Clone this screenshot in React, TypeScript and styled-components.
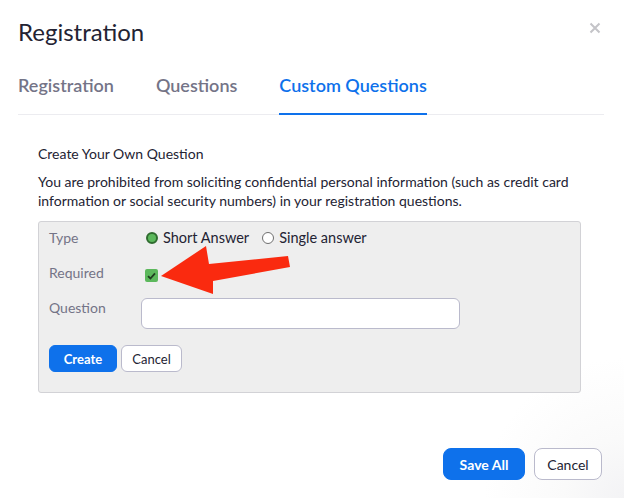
import React from "react";
import styled, { createGlobalStyle } from "styled-components";

const Global = createGlobalStyle`
  html, body { margin: 0; padding: 0; }
  body {
    width: 624px;
    height: 498px;
    overflow: hidden;
    background: radial-gradient(circle at 100% 100%, #f3f3f5 0px, #fafafa 60px, #ffffff 140px);
    font-family: Lato, "Open Sans", sans-serif;
    color: #232333;
  }
  * { box-sizing: border-box; }
`;

const Dialog = styled.div`
  position: relative;
  width: 624px;
  height: 498px;
  padding: 18px 20px 0 18px;
  display: flex;
  flex-direction: column;
`;

const Header = styled.div`
  display: flex;
  justify-content: space-between;
  align-items: flex-start;
`;

const Title = styled.h1`
  margin: 0;
  font-size: 24px;
  line-height: 28px;
  font-weight: 400;
  color: #232333;
`;

const Close = styled.button`
  border: 0;
  background: none;
  padding: 0;
  margin: 4px 3px 0 0;
  width: 12px;
  height: 12px;
  display: flex;
`;

const Tabs = styled.div`
  margin-top: 28px;
  display: flex;
  gap: 42px;
  border-bottom: 1px solid #ececf0;
`;

const Tab = styled.div<{ $active?: boolean }>`
  font-size: 18px;
  line-height: 22px;
  font-weight: 600;
  padding-bottom: 17px;
  margin-bottom: -1px;
  color: ${(p) => (p.$active ? "#0e71eb" : "#747487")};
  border-bottom: 2px solid ${(p) => (p.$active ? "#0e71eb" : "transparent")};
`;

const Content = styled.div`
  padding: 29px 23px 0 20px;
`;

const Heading = styled.div`
  font-size: 14px;
  line-height: 20px;
`;

const Notice = styled.p`
  margin: 8px 0 11px;
  font-size: 14px;
  line-height: 19px;
`;

const Panel = styled.div`
  background: #eeeeee;
  border: 1px solid #d2d2d6;
  border-radius: 3px;
  padding: 6px 10px 20px 10px;
  display: flex;
  flex-direction: column;
  gap: 15px;
`;

const Row = styled.div`
  display: flex;
  align-items: flex-start;
`;

const Label = styled.div`
  width: 92px;
  font-size: 14px;
  line-height: 20px;
  color: #747487;
`;

const Options = styled.div`
  display: flex;
  align-items: center;
  height: 20px;
  padding-left: 5px;
  gap: 13px;
`;

const Option = styled.label`
  display: flex;
  align-items: center;
  gap: 5px;
  font-size: 14.5px;
  line-height: 20px;
  color: #232333;
`;

const Radio = styled.span<{ $checked?: boolean }>`
  width: 12px;
  height: 12px;
  border-radius: 50%;
  border: ${(p) => (p.$checked ? "2px solid #2f6b2f" : "1px solid #6f6f6f")};
  background: ${(p) => (p.$checked ? "#5cb85c" : "#ffffff")};
`;

const Check = styled.span`
  margin: 6px 0 0 4px;
  width: 13px;
  height: 13px;
  border-radius: 2px;
  background: #5cb85c;
  display: flex;
  align-items: center;
  justify-content: center;
`;

const Input = styled.input`
  width: 319px;
  height: 31px;
  margin-left: 0;
  border: 1px solid #babacc;
  border-radius: 6px;
  background: #fff;
  font: inherit;
  outline: none;
`;

const Buttons = styled.div<{ $end?: boolean }>`
  display: flex;
  margin-top: ${(p) => (p.$end ? "0" : "1px")};
  gap: ${(p) => (p.$end ? "9px" : "4px")};
  justify-content: ${(p) => (p.$end ? "flex-end" : "flex-start")};
`;

const Button = styled.button<{ $primary?: boolean; $w: number; $h: number; $fs: number }>`
  width: ${(p) => p.$w}px;
  height: ${(p) => p.$h}px;
  font-family: Lato, sans-serif;
  font-size: ${(p) => p.$fs}px;
  font-weight: ${(p) => (p.$primary ? 700 : 400)};
  border-radius: ${(p) => (p.$h > 30 ? 8 : 6)}px;
  padding: 0;
  color: ${(p) => (p.$primary ? "#ffffff" : "#232333")};
  background: ${(p) => (p.$primary ? "#0e71eb" : "#ffffff")};
  border: 1px solid ${(p) => (p.$primary ? "#0e71eb" : "#babacc")};
`;

const Footer = styled.div`
  margin-top: 55px;
  padding-right: 2px;
`;

const ArrowLayer = styled.svg`
  position: absolute;
  left: 0;
  top: 0;
  pointer-events: none;
`;

export default function App() {
  return (
    <>
      <Global />
      <Dialog>
        <Header>
          <Title>Registration</Title>
          <Close aria-label="close">
            <svg width="12" height="12" viewBox="0 0 12 12">
              <path d="M1.5 1.5 L10.5 10.5 M10.5 1.5 L1.5 10.5" stroke="#c4c4c8" strokeWidth="2" />
            </svg>
          </Close>
        </Header>
        <Tabs>
          <Tab>Registration</Tab>
          <Tab>Questions</Tab>
          <Tab $active>Custom Questions</Tab>
        </Tabs>
        <Content>
          <Heading>Create Your Own Question</Heading>
          <Notice>
            You are prohibited from soliciting confidential personal information (such as credit card
            information or social security numbers) in your registration questions.
          </Notice>
          <Panel>
            <Row>
              <Label>Type</Label>
              <Options>
                <Option>
                  <Radio $checked />
                  Short Answer
                </Option>
                <Option>
                  <Radio />
                  Single answer
                </Option>
              </Options>
            </Row>
            <Row>
              <Label>Required</Label>
              <Check>
                <svg width="9" height="8" viewBox="0 0 9 8">
                  <path d="M1 4.2 L3.4 6.5 L8 1.3" stroke="#1f3d1f" strokeWidth="1.8" fill="none" />
                </svg>
              </Check>
            </Row>
            <Row>
              <Label>Question</Label>
              <Input />
            </Row>
            <Buttons>
              <Button $primary $w={68} $h={27} $fs={13}>Create</Button>
              <Button $w={61} $h={27} $fs={13}>Cancel</Button>
            </Buttons>
          </Panel>
        </Content>
        <Footer>
          <Buttons $end>
            <Button $primary $w={82} $h={32} $fs={14}>Save All</Button>
            <Button $w={68} $h={32} $fs={14}>Cancel</Button>
          </Buttons>
        </Footer>
        <ArrowLayer width="624" height="498" viewBox="0 0 624 498">
          <polygon
            points="161,276 206,246 209,264 288,256 290,267 213,281 213,294"
            fill="#fa2a0f"
          />
        </ArrowLayer>
      </Dialog>
    </>
  );
}
